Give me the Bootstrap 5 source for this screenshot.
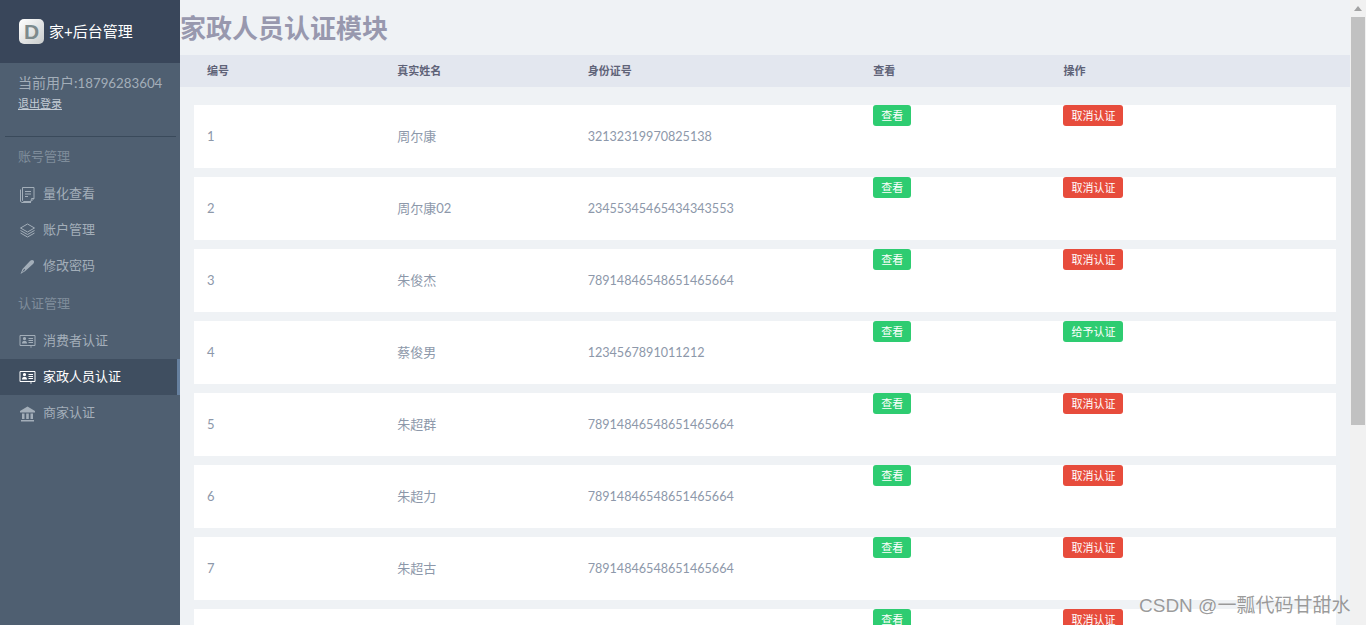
<!DOCTYPE html>
<html lang="zh-CN">
<head>
  <meta charset="UTF-8">
  <meta name="viewport" content="width=device-width, initial-scale=1.0">
  <title>家政人员认证</title>
  <link href="https://cdn.jsdelivr.net/npm/bootstrap@5.3.0/dist/css/bootstrap.min.css" rel="stylesheet">
  <style>
    html, body { height: 100%; overflow: hidden; }
    body {
      background-color: #eff2f5;
      font-family: Lato, "Noto Sans CJK SC", sans-serif;
      font-size: 13px;
    }
    .side-panel { width: 180px; height: 625px; background-color: #4f5f71; color: #a3aeb9; }
    .side-brand { height: 63px; background-color: #39465a; color: #fff; font-size: 15px; padding-left: 19px; }
    .brand-logo {
      width: 25px; height: 25px; border-radius: 5px; margin-right: 5px;
      background: linear-gradient(135deg, #fff, #c9cccc);
      color: #7d8a8c; font: bold 21px/25px "Liberation Sans", sans-serif; text-align: center;
    }
    .side-user { height: 73px; padding: 11px 0 0 18px; line-height: 18px; font-size: 14px; white-space: nowrap; }
    .side-user .user-no { font-size: 13.3px; }
    .side-user a { display: block; margin-top: 4px; color: #c3ccd5; font-size: 11px; line-height: 16px; }
    .side-line { height: 1px; margin: 0 4px 0 5px; background-color: #3a4a5b; }
    .side-title { height: 37px; padding-left: 18px; line-height: 38px; color: #7f8d9b; }
    .side-first { height: 39px; line-height: 38px; }
    .side-second { height: 39px; }
    .side-item { height: 36px; padding-left: 19px; color: #a3aeb9; text-decoration: none; }
    .side-item svg { width: 17px; height: 17px; margin-right: 7px; flex: none; }
    .side-item.is-on { background-color: #3f4e60; color: #fff; border-right: 3px solid #66809f; }
    .main-area { width: 1170px; height: 625px; overflow: hidden; }
    .page-title { height: 55px; margin: 0; font-size: 26px; font-weight: 700; line-height: 56px; color: #9898ae; white-space: nowrap; }
    .head-band { height: 32px; padding: 0 14px; margin-bottom: 18px; background-color: #e3e7ef; color: #5f6378; font-size: 11px; font-weight: 700; line-height: 31px; }
    .head-band .col-2, .head-band .col-3, .data-row .col-2, .data-row .col-3 { padding-left: 13px; }
    .data-row { height: 63px; margin: 0 14px 9px; background-color: #fff; color: #8d98aa; line-height: 63px; }
    .data-row .id-cell { font-size: 12.6px; }
    .act-btn {
      display: block; width: max-content; height: 21px; padding: 0 8px; border: 0; border-radius: 3px;
      color: #fff; font-size: 11px; line-height: 20px;
    }
    .act-view { background-color: #2ecc71; }
    .act-off { background-color: #e74c3c; }
    .fake-scroll { width: 16px; height: 625px; background-color: #f1f1f1; }
    .fake-arrow { height: 17px; padding-top: 6px; }
    .fake-arrow svg { display: block; margin: 0 auto; }
    .fake-thumb { height: 408px; margin: 0 1px; background-color: #c1c1c1; }
    .csdn-mark {
      position: absolute; left: 1139px; top: 593px; white-space: nowrap;
      font: 19px/25px "Liberation Sans", "Noto Sans CJK SC", sans-serif; color: rgba(110, 110, 110, .7);
      text-shadow: 0 0 1px rgba(255, 255, 255, .7);
    }
  </style>
</head>
<body>
  <div class="d-flex">
    <!-- Sidebar -->
    <div class="side-panel flex-shrink-0">
      <div class="side-brand d-flex align-items-center">
        <span class="brand-logo">D</span>家+后台管理
      </div>
      <div class="side-user">
        当前用户:<span class="user-no">18796283604</span>
        <a href="#">退出登录</a>
      </div>
      <div class="side-line"></div>
      <div class="side-title side-first">账号管理</div>
      <a class="side-item d-flex align-items-center" href="#">
        <svg viewBox="0 0 17 17" fill="none" stroke="currentColor"><path d="M3.500 14.500v-13h11.500v11l-3 3H4.500zM1.500 3.500v12l1.500 1h9M6 5.500h6M6 8h6M6 10.500h3M12 15l.5-2.500H15"/></svg>量化查看
      </a>
      <a class="side-item d-flex align-items-center" href="#">
        <svg viewBox="0 0 17 17" fill="none" stroke="currentColor"><path d="M8.500 2l7 4-7 4-7-4zM1.500 8.500l7 4 7-4M1.500 11l7 4 7-4"/></svg>账户管理
      </a>
      <a class="side-item d-flex align-items-center" href="#">
        <svg viewBox="0 0 17 17" fill="currentColor"><path d="M1.500 16l2-5 7.500-8c1-1 2.500-1.500 3.500-.5s.5 2.500-.5 3.500l-8 7.200zM3 14.500l3.200-2.800-1-1z"/></svg>修改密码
      </a>
      <div class="side-title side-second">认证管理</div>
      <a class="side-item d-flex align-items-center" href="#">
        <svg viewBox="0 0 17 17" fill="none" stroke="currentColor"><path d="M1 2.500h15v10H1zM9.500 5.500H14M9.500 7.500H14M9.500 9.500H14"/><path d="M3 10.500c0-2 1-2.500 2.500-2.500s2.500.5 2.500 2.500zM5.500 4a1.600 1.600 0 1 0 .01 0zM11 13.500h2l-1 1.500z" fill="currentColor" stroke="none"/></svg>消费者认证
      </a>
      <a class="side-item is-on d-flex align-items-center" href="#">
        <svg viewBox="0 0 17 17" fill="none" stroke="currentColor"><path d="M1 2.500h15v10H1zM9.500 5.500H14M9.500 7.500H14M9.500 9.500H14"/><path d="M3 10.500c0-2 1-2.500 2.500-2.500s2.500.5 2.500 2.500zM5.500 4a1.600 1.600 0 1 0 .01 0zM11 13.500h2l-1 1.500z" fill="currentColor" stroke="none"/></svg>家政人员认证
      </a>
      <a class="side-item d-flex align-items-center" href="#">
        <svg viewBox="0 0 17 17" fill="currentColor"><path d="M8.500 1.500L16 6v1.500H1V6zM2 15h13v1.500H2zM3 8.500h2.500V14H3zM7.200 8.500h2.600V14H7.200zM11.500 8.500H14V14h-2.500z"/></svg>商家认证
      </a>
    </div>

    <!-- Main content -->
    <div class="main-area flex-shrink-0">
      <h1 class="page-title">家政人员认证模块</h1>
      <div class="head-band row g-0">
        <div class="col-2">编号</div>
        <div class="col-2">真实姓名</div>
        <div class="col-3">身份证号</div>
        <div class="col-2">查看</div>
        <div class="col-3">操作</div>
      </div>
      <div id="rowList"></div>
    </div>

    <!-- Scrollbar as it shows in the screenshot -->
    <div class="fake-scroll flex-shrink-0">
      <div class="fake-arrow"><svg width="8" height="5" viewBox="0 0 8 5"><path d="M4 0l4 5H0z" fill="#a3a3a3"/></svg></div>
      <div class="fake-thumb"></div>
    </div>
  </div>

  <div class="csdn-mark">CSDN @一瓢代码甘甜水</div>

  <script>
    // last row is below the fold, only its buttons show
    const staff = [
      ['1', '周尔康', '32132319970825138', false],
      ['2', '周尔康02', '23455345465434343553', false],
      ['3', '朱俊杰', '78914846548651465664', false],
      ['4', '蔡俊男', '1234567891011212', true],
      ['5', '朱超群', '78914846548651465664', false],
      ['6', '朱超力', '78914846548651465664', false],
      ['7', '朱超古', '78914846548651465664', false],
      ['', '', '', false]
    ];

    const rowList = document.getElementById('rowList');
    staff.forEach(item => {
      const action = item[3]
        ? '<button class="act-btn act-view">给予认证</button>'
        : '<button class="act-btn act-off">取消认证</button>';
      const row = `
        <div class="data-row row g-0">
          <div class="col-2">${item[0]}</div>
          <div class="col-2">${item[1]}</div>
          <div class="col-3 id-cell">${item[2]}</div>
          <div class="col-2"><button class="act-btn act-view">查看</button></div>
          <div class="col-3">${action}</div>
        </div>
      `;
      rowList.insertAdjacentHTML('beforeend', row);
    });
  </script>

  <script src="https://cdn.jsdelivr.net/npm/bootstrap@5.3.0/dist/js/bootstrap.bundle.min.js"></script>
</body>
</html>
